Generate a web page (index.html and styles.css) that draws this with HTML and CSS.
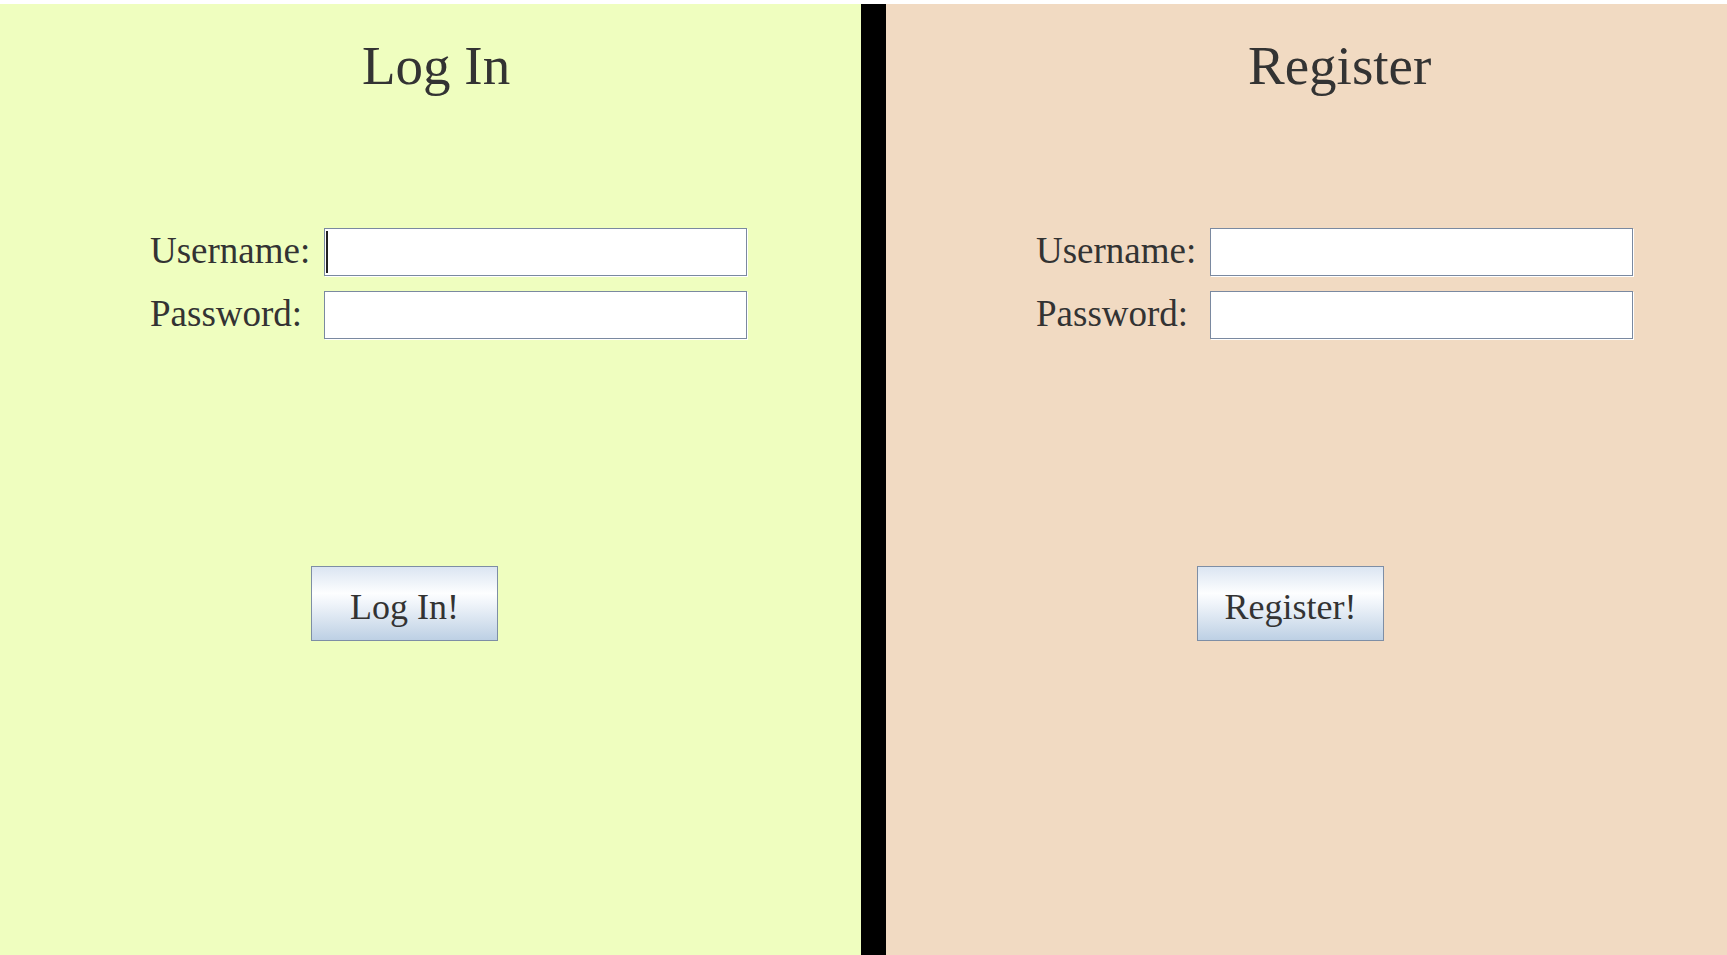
FILE: index.html
```html
<!DOCTYPE html>
<html lang="en">
<head>
<meta charset="utf-8">
<title>Log In / Register</title>
<link rel="stylesheet" href="styles.css">
</head>
<body>
<main class="screen">
  <section class="panel panel-login">
    <h1 class="panel-title">Log In</h1>
    <form class="fields">
      <label class="field-label" for="lu">Username:</label>
      <input class="field-input is-focused" id="lu" type="text">
      <label class="field-label" for="lp">Password:</label>
      <input class="field-input" id="lp" type="password">
    </form>
    <button class="action" type="button">Log In!</button>
  </section>
  <div class="divider"></div>
  <section class="panel panel-register">
    <h1 class="panel-title">Register</h1>
    <form class="fields">
      <label class="field-label" for="ru">Username:</label>
      <input class="field-input" id="ru" type="text">
      <label class="field-label" for="rp">Password:</label>
      <input class="field-input" id="rp" type="password">
    </form>
    <button class="action" type="button">Register!</button>
  </section>
</main>
</body>
</html>
```

FILE: styles.css
```css
html, body {
  margin: 0;
  padding: 0;
  height: 100%;
  background: #ffffff;
}

body {
  padding-top: 4px;
  box-sizing: border-box;
  font-family: "Liberation Serif", "Times New Roman", serif;
  color: #333333;
  overflow: hidden;
}

.screen {
  display: flex;
  height: 100%;
}

.panel {
  display: flex;
  flex-direction: column;
  align-items: flex-start;
  padding-top: 31px;
  box-sizing: border-box;
}

.panel-login {
  width: 861px;
  background: #effebf;
}

.panel-register {
  flex: 1;
  background: #f1dac2;
}

.divider {
  width: 25px;
  background: #000000;
}

.panel-title {
  margin: 0 0 0 362px;
  font-size: 55px;
  line-height: 62px;
  font-weight: normal;
}

.fields {
  display: grid;
  grid-template-columns: 174px 423px;
  row-gap: 15px;
  margin: 131px 0 0 150px;
}

.field-label {
  font-size: 37px;
  line-height: 40px;
  padding-top: 3px;
  align-self: start;
}

.field-input {
  width: 423px;
  height: 48px;
  box-sizing: border-box;
  margin: 0;
  padding: 0 6px;
  border: 1px solid #7a89a0;
  border-radius: 0;
  background: #ffffff;
  box-shadow: 1px 1px 0 #ffffff;
  font-family: inherit;
  font-size: 30px;
  outline: none;
}

.field-input.is-focused {
  background: linear-gradient(#222222, #222222) no-repeat 1px 2px / 2px calc(100% - 4px), #ffffff;
}

.action {
  margin: 227px 0 0 311px;
  width: 187px;
  height: 75px;
  box-sizing: border-box;
  padding: 6px 0 0;
  border: 1px solid #7e8ea5;
  border-radius: 0;
  background: linear-gradient(to bottom, #dbe5f2 0%, #fdfeff 36%, #eef3f9 52%, #bdd0e4 100%);
  font-family: inherit;
  font-size: 36px;
  color: #333333;
  cursor: pointer;
}
```
